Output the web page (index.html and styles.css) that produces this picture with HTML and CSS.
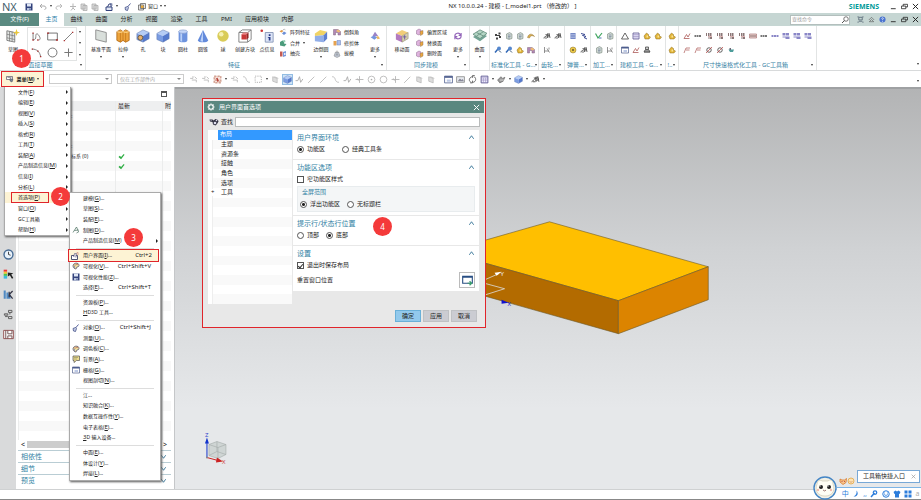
FILE: index.html
```html
<!DOCTYPE html>
<html lang="zh-CN">
<head>
  <meta charset="UTF-8">
  <meta name="viewport" content="width=device-width, initial-scale=1.0">
  <title>NX 10.0.0.24 - 建模</title>
  <link rel="stylesheet" href="styles.css">
</head>
<body>
  <!-- icon set -->
  <svg class="defs" width="0" height="0">
    <symbol id="save" viewBox="0 0 16 16"><path d="M1 1h14v14H1z" fill="#33427c"/><path d="M4 1h8v6H4z" fill="#dfe6f5"/><path d="M4 10h8v5H4z" fill="#b9c4de"/><path d="M9 11h2v3H9z" fill="#33427c"/></symbol>
    <symbol id="undo" viewBox="0 0 16 16"><path d="M3 6h7c5 0 5 7 1 7M6 2L2 6l4 4" fill="none" stroke="#aaa" stroke-width="2"/></symbol>
    <symbol id="redo" viewBox="0 0 16 16"><path d="M13 6H6c-5 0-5 7-1 7M10 2l4 4-4 4" fill="none" stroke="#bbb" stroke-width="2"/></symbol>
    <symbol id="cut" viewBox="0 0 16 16"><path d="M8 1v9M2 7h12M8 10l-4 5M8 10l4 4" fill="none" stroke="#b5b5b5" stroke-width="2"/></symbol>
    <symbol id="copy" viewBox="0 0 16 16"><path d="M2 2h8v10H2zM6 5h8v10H6z" fill="#ddd" stroke="#aaa" stroke-width="1.5"/></symbol>
    <symbol id="touch" viewBox="0 0 16 16"><path d="M2 8h12v7H2z" fill="#dfe4f2" stroke="#33427c" stroke-width="2"/><path d="M5 8l3-6h4v6" fill="none" stroke="#33427c" stroke-width="2"/><path d="M10 2l4-1v5" stroke="#33427c" fill="none"/></symbol>
    <symbol id="swap" viewBox="0 0 16 16"><path d="M1 11h6M4 8l-3 3 3 3M7 4h6v6H8z" fill="#c3cbe6" stroke="#33427c" stroke-width="1.6"/></symbol>
    <symbol id="brush" viewBox="0 0 16 16"><path d="M13 1L7 8" stroke="#556099" stroke-width="2"/><path d="M7 7L2 9l1 5 4 1 2-6z" fill="#c3cbe6" stroke="#33427c" stroke-width="1.4"/></symbol>
    <symbol id="win" viewBox="0 0 16 16"><path d="M1 4h10v10H1zM5 1h10v10H5z" fill="#e8e8e8" stroke="#555" stroke-width="1.4"/><path d="M6 5h5v5H6z" fill="#e5a83b"/></symbol>
    <symbol id="sketch" viewBox="0 0 16 16"><path d="M1 2l9 2v11l-9-2z" fill="#e3e6e4" stroke="#777"/><path d="M1 6l9 2M1 10l9 2M4 3v11M7 3v11" stroke="#777" stroke-width=".8"/><path d="M12 0l1 3 3 1-3 1-1 3-1-3-3-1 3-1z" fill="#e9c73c"/></symbol>
    <symbol id="profile" viewBox="0 0 16 16"><path d="M3 3v10M3 13c3 0 4-2 4-5 0-5 2-5 4-2 3 4 3 7 0 7" fill="none" stroke="#777" stroke-width="1.3"/><path d="M2 2h2v2H2zM2 12h2v2H2zM9 12h2v2H9z" fill="#a33"/></symbol>
    <symbol id="rect" viewBox="0 0 16 16"><path d="M1 3h14v10H1z" fill="none" stroke="#666" stroke-width="1.3"/><path d="M0 2h3v2H0zM13 12h3v2h-3z" fill="#a33"/></symbol>
    <symbol id="line" viewBox="0 0 16 16"><path d="M2 14L14 2" stroke="#777" stroke-width="1.3"/><path d="M1 13h2v2H1zM13 1h2v2h-2z" fill="#a33"/></symbol>
    <symbol id="arc" viewBox="0 0 16 16"><path d="M2 3c6 0 11 4 12 11" fill="none" stroke="#777" stroke-width="1.3"/><path d="M1 2h2v2H1zM13 13h2v2h-2zM9 5h2v2H9z" fill="#a33"/></symbol>
    <symbol id="circle" viewBox="0 0 16 16"><circle cx="8" cy="8" r="6.5" fill="none" stroke="#666" stroke-width="1.3"/></symbol>
    <symbol id="plus" viewBox="0 0 16 16"><path d="M8 2v12M2 8h12" stroke="#777" stroke-width="1.5"/></symbol>
    <symbol id="plane" viewBox="0 0 16 16"><path d="M2 1l12 3v11L2 12z" fill="#d9dfdb" stroke="#888"/></symbol>
    <symbol id="extrude" viewBox="0 0 16 16"><path d="M1 3l4-2 3 2 3-2 4 2v10l-4 2-3-2-3 2-4-2z" fill="#eda43c" stroke="#b36a16"/><path d="M5 4v11M11 4v11M8 3v10" stroke="#c67a1e"/><path d="M1 3l4 1 3-1 3 1 4-1" fill="none" stroke="#ffdf9a"/></symbol>
    <symbol id="cube" viewBox="0 0 16 16"><path d="M1 5l7-4 7 3-7 4z" fill="#b5ccf5"/><path d="M1 5l7 3v7l-7-3z" fill="#7a9ce2"/><path d="M8 8l7-4v7l-7 4z" fill="#5579cc"/><path d="M1 5l7-4 7 3v7l-7 4-7-3z" fill="none" stroke="#6079ad" stroke-width=".6"/></symbol>
    <symbol id="hole" viewBox="0 0 16 16"><use href="#cube"/><circle cx="5" cy="10" r="2.8" fill="#e6b06c" stroke="#63553f"/></symbol>
    <symbol id="cyl" viewBox="0 0 16 16"><path d="M3 3v10c0 3 10 3 10 0V3" fill="#6d93de"/><path d="M5 4v10l2 .5V4z" fill="#b9d0f8"/><ellipse cx="8" cy="3" rx="5" ry="2" fill="#c4d6f8" stroke="#6b86c0" stroke-width=".6"/></symbol>
    <symbol id="cone" viewBox="0 0 16 16"><path d="M8 1l6 12c-1 3-11 3-12 0z" fill="#638adb"/><path d="M8 1L5 14l3 .5z" fill="#b9d0f8"/></symbol>
    <symbol id="ball" viewBox="0 0 16 16"><circle cx="8" cy="8" r="6.5" fill="#d9cc58"/><circle cx="6" cy="6" r="2.6" fill="#f5f0b2"/></symbol>
    <symbol id="redcube" viewBox="0 0 16 16"><path d="M1 4l4-3h10v11l-4 3H1zM1 4h10v11M11 4l4-3" fill="none" stroke="#777"/><path d="M4 6h6v6H4z" fill="#c93737"/><path d="M4 6l2-2h6l-2 2z" fill="#ee8585"/><path d="M10 6l2-2v6l-2 2z" fill="#952424"/></symbol>
    <symbol id="info" viewBox="0 0 16 16"><circle cx="2" cy="2" r="1.5" fill="#c33"/><path d="M6 4h9v11H6z" fill="#dce4f7" stroke="#8492b5"/><path d="M10 6h2v2h-2zM9 9h3v4h1H9h1v-3H9z" fill="#2a3c88"/></symbol>
    <symbol id="pattern" viewBox="0 0 16 16"><path d="M1 7l4-3 4 2-4 3z" fill="#e39a45"/><path d="M6 11l4-4 5 3-5 4z" fill="#6b8ed6"/><path d="M7 5l3-3 3 2" fill="none" stroke="#888"/></symbol>
    <symbol id="unite" viewBox="0 0 16 16"><path d="M2 6l5-3 3 2v4l5 1-4 5-9-2z" fill="#4b9b7b"/><path d="M7 3l5-1 1 4-3 1z" fill="#94cfb4"/></symbol>
    <symbol id="shell" viewBox="0 0 16 16"><path d="M2 3h5v10H2z" fill="#c35b53"/><path d="M8 4l6-2v10l-6 2z" fill="#7797db"/><path d="M10 6h3v4h-3z" fill="#e8edf8"/></symbol>
    <symbol id="blend" viewBox="0 0 16 16"><path d="M1 5l6-4 8 2-4 4-10 1z" fill="#f1d364"/><path d="M1 8l10-1v8L1 14z" fill="#91aee8"/><path d="M11 7l4-4v8l-4 4z" fill="#5c7fd0"/></symbol>
    <symbol id="chamfer" viewBox="0 0 16 16"><path d="M1 3h9l5 4v7h-5V9H5v5H1z" fill="#b187b5" stroke="#80677f"/><path d="M10 3l5 4-4 2-5-3z" fill="#f0bd72"/></symbol>
    <symbol id="trim" viewBox="0 0 16 16"><path d="M1 4h6v9H1z" fill="#e6a24f"/><path d="M8 3h7v9H8z" fill="#a9bfee" stroke="#667db6"/></symbol>
    <symbol id="draft" viewBox="0 0 16 16"><path d="M2 12l3-8h6l3 8-6 3z" fill="#c2cad8" stroke="#7a7a7a"/><path d="M8 1v9M5 10h6" stroke="#777"/></symbol>
    <symbol id="more" viewBox="0 0 16 16"><path d="M1 10l5-3 6 3-5 4z" fill="#7695dd"/><path d="M8 1l5 7H4z" fill="#9a83c7"/><path d="M10 9l3-1 3 4-4 1z" fill="#ecb95d"/></symbol>
    <symbol id="move" viewBox="0 0 16 16"><path d="M1 5l7-4 7 3-7 4z" fill="#f2cd79"/><path d="M1 5l7 3v7l-7-3z" fill="#b27ac0"/><path d="M8 8l7-4v7l-7 4z" fill="#d6cfae" stroke="#8a856d" stroke-width=".6"/><path d="M11 7v5M9 9h4" stroke="#6a58a0"/></symbol>
    <symbol id="face" viewBox="0 0 16 16"><path d="M1 5l5-3 4 2v7l-4 3-5-2z" fill="#dfb3de" stroke="#8e6b91"/><path d="M8 7l6-2v7l-5 3z" fill="#eea83f" stroke="#7b6349" stroke-width=".8"/></symbol>
    <symbol id="cycle" viewBox="0 0 16 16"><path d="M3 8c0-5 7-6 9-2M13 8c0 5-7 6-9 2M13 3v4H9M3 13V9h4" fill="none" stroke="#9365b9" stroke-width="1.8"/></symbol>
    <symbol id="surface" viewBox="0 0 16 16"><path d="M0 9l8-5 8 4-8 6z" fill="#72a495"/><path d="M0 6l8-5 8 4-8 6z" fill="#b4d6c5" stroke="#6a9282"/><path d="M4 4l8 4M4 8l8-5" stroke="#6a9282"/></symbol>
    <symbol id="nodes" viewBox="0 0 16 16"><path d="M2 4h4v4H2zM9 1h4v4H9zM10 8h4v4h-4zM4 11h4v4H4zM6 6h6v2H6z" fill="#444"/></symbol>
    <symbol id="doc" viewBox="0 0 16 16"><path d="M3 4l6-3 5 3v9l-6 2-5-2z" fill="#ccd5d0" stroke="#68786f"/><path d="M6 6h5M6 9h5M6 12h4" stroke="#568"/></symbol>
    <symbol id="gold" viewBox="0 0 16 16"><path d="M2 8l5-6 4 3v3l4 2-3 4H4z" fill="#e2b538" stroke="#8c6c22"/><path d="M7 7h3v4H7z" fill="#fbe493"/></symbol>
    <symbol id="leaf" viewBox="0 0 16 16"><path d="M1 11c2-8 9-9 14-2-5-3-8-2-10 3z" fill="#d9ad4d" stroke="#94763c"/></symbol>
    <symbol id="wrench" viewBox="0 0 16 16"><path d="M2 13l6-7" stroke="#2e66b5" stroke-width="3"/><circle cx="10" cy="5" r="4" fill="#5587ce"/><path d="M10 9l4 4" stroke="#3b5776" stroke-width="2"/></symbol>
    <symbol id="gear2" viewBox="0 0 16 16"><path d="M1 12l5-4M5 5l9 3M9 3v9M12 2l2 10M3 12h5" fill="none" stroke="#555" stroke-width="1.7"/><circle cx="10" cy="7" r="3" fill="none" stroke="#555" stroke-width="1.5"/></symbol>
    <symbol id="spring" viewBox="0 0 16 16"><path d="M3 2h10v12H3z" fill="#5970b6"/><path d="M3 5h10M3 8h10M3 11h10M6 2v12M10 2v12" stroke="#cfd7f2"/></symbol>
    <symbol id="coil" viewBox="0 0 16 16"><path d="M2 3l8 2-5 2 7 2-4 2 6 3" fill="none" stroke="#3d4c94" stroke-width="2"/></symbol>
    <symbol id="ring" viewBox="0 0 16 16"><circle cx="8" cy="8" r="6" fill="#e9c747" stroke="#8b7127"/><circle cx="8" cy="8" r="2" fill="#655631"/></symbol>
    <symbol id="check" viewBox="0 0 16 16"><path d="M1 3l5 9 8-10" fill="none" stroke="#3ea55e" stroke-width="2.4"/><path d="M8 12h5" stroke="#5273b5" stroke-width="2"/></symbol>
    <symbol id="axes" viewBox="0 0 16 16"><path d="M3 2v12M3 10h9M8 5l5 8M12 3v4" fill="none" stroke="#666" stroke-width="1.4"/></symbol>
    <symbol id="tri" viewBox="0 0 16 16"><path d="M8 2l7 12H1z" fill="none" stroke="#444" stroke-width="1.6"/></symbol>
    <symbol id="grid" viewBox="0 0 16 16"><path d="M2 2h12v12H2z" fill="#eef" stroke="#5a548e" stroke-width="1.6"/><path d="M2 5h12M6 5v9M10 5v9M2 9h12" stroke="#9284b8"/></symbol>
    <symbol id="stamp" viewBox="0 0 16 16"><path d="M5 2h6v5H5zM2 12h12M4 8h8l2 4H2z" fill="#ccc" stroke="#444" stroke-width="1.5"/></symbol>
    <symbol id="redsk" viewBox="0 0 16 16"><path d="M2 13l5-8 3 5 4-7M2 13h11" fill="none" stroke="#a8514f" stroke-width="1.5"/></symbol>
    <symbol id="leader" viewBox="0 0 16 16"><path d="M2 14L6 4h8M6 8h7" fill="none" stroke="#b0605e" stroke-width="1.5"/></symbol>
    <symbol id="tol" viewBox="0 0 16 16"><path d="M2 2h2v6H2zM6 2h3v6H6zM10 2h3v6h-3zM7 10h2v4H7zM10 10h4v4h-4z" fill="#8b7777"/><path d="M6 8h8v1H6z" fill="#b66"/></symbol>
    <symbol id="tol1" viewBox="0 0 16 16"><path d="M1 6h3v4H1zM5 6h4v4H5zM10 6h4v4h-4z" fill="#777"/></symbol>
    <symbol id="tolb" viewBox="0 0 16 16"><path d="M1 4h14v8H1z" fill="#e9d5d2" stroke="#a77" stroke-width="1.4"/><path d="M3 6h2v4H3zM7 6h2v4H7zM11 6h2v4h-2z" fill="#866"/></symbol>
    <symbol id="tolv" viewBox="0 0 16 16"><path d="M1 6h4v4H1zM6 6h4v4H6zM11 6h4v4h-4z" fill="#8a87c7"/></symbol>
    <symbol id="tolp" viewBox="0 0 16 16"><path d="M1 2h6v5H1zM8 2h6v5H8zM1 9h6v2H1zM7 9h8v5H7z" fill="#8a87c7"/></symbol>
    <symbol id="dia" viewBox="0 0 16 16"><circle cx="8" cy="8" r="4.5" fill="none" stroke="#333" stroke-width="1.5"/><path d="M2 14L14 2" stroke="#b44" stroke-width="1.5"/></symbol>
    <symbol id="drop" viewBox="0 0 16 16"><path d="M3 7h11l-2 5H6z" fill="#4d9d9b"/><path d="M5 4h3v4H5z" fill="#667"/></symbol>
    <symbol id="glass" viewBox="0 0 16 16"><circle cx="10" cy="6" r="4.5" fill="none" stroke="#555" stroke-width="1.6"/><path d="M7 9l-5 5" stroke="#555" stroke-width="2"/></symbol>
    <symbol id="full" viewBox="0 0 16 16"><path d="M1 2h3M12 2h3M1 14h3M12 14h3" stroke="#456" stroke-width="1.6"/><path d="M4 3h8v6H4zM4 12h8" fill="none" stroke="#456" stroke-width="1.6"/></symbol>
    <symbol id="up" viewBox="0 0 16 16"><path d="M2 9l6-6 6 6M3 13l5-5 5 5z" fill="none" stroke="#555" stroke-width="1.4"/></symbol>
    <symbol id="help" viewBox="0 0 16 16"><circle cx="8" cy="8" r="7" fill="#4a73cf"/><path d="M6 6c0-3 5-2 4 0-1 1-2 1-2 3M8 11v2" fill="none" stroke="#fff" stroke-width="1.6"/></symbol>
    <symbol id="min" viewBox="0 0 16 16"><path d="M2 13h11" stroke="#222" stroke-width="2"/></symbol>
    <symbol id="restore" viewBox="0 0 16 16"><path d="M1 7h10v6H1zM5 7V3h10v6h-4" fill="none" stroke="#222" stroke-width="1.8"/></symbol>
    <symbol id="close" viewBox="0 0 16 16"><path d="M2 2l12 12M14 2L2 14" stroke="currentColor" stroke-width="2.2"/></symbol>
    <symbol id="ghost" viewBox="0 0 16 16"><path d="M2 6h5V2M5 9h8v4M10 3l4 4" fill="none" stroke="#bbb" stroke-width="1.6"/></symbol>
    <symbol id="gdash" viewBox="0 0 16 16"><path d="M2 2h11v11H2z" fill="none" stroke="#999" stroke-dasharray="2 2" stroke-width="1.4"/></symbol>
    <symbol id="snap" viewBox="0 0 16 16"><path d="M2 2h12v12H2z" fill="#f7e4dd" stroke="#b06047" stroke-dasharray="4 2" stroke-width="1.4"/><path d="M4 9h7M8 5v7M5 5l6 7" fill="none" stroke="#b33a2c" stroke-width="1.4"/></symbol>
    <symbol id="gline" viewBox="0 0 16 16"><path d="M2 14L13 3" stroke="#bbb" stroke-width="1.6"/></symbol>
    <symbol id="gcurve" viewBox="0 0 16 16"><path d="M2 3c8 0 3 10 12 10" fill="none" stroke="#bbb" stroke-width="1.6"/></symbol>
    <symbol id="gwave" viewBox="0 0 16 16"><path d="M1 10h4l3-7 2 10 4-6" fill="none" stroke="#aaa" stroke-width="1.6"/></symbol>
    <symbol id="gcross" viewBox="0 0 16 16"><path d="M8 2v12M1 8h14M4 6l2 4" stroke="#b5b5b5" stroke-width="1.6"/></symbol>
    <symbol id="gdot" viewBox="0 0 16 16"><circle cx="8" cy="8" r="6" fill="none" stroke="#b0b0b0" stroke-width="1.4"/><circle cx="8" cy="8" r="1.5" fill="#aaa"/></symbol>
    <symbol id="gcirc" viewBox="0 0 16 16"><circle cx="8" cy="8" r="6" fill="none" stroke="#b0b0b0" stroke-width="1.4"/></symbol>
    <symbol id="gface" viewBox="0 0 16 16"><path d="M3 3l8 3v8l-8-3zM6 3l7 3" fill="#ddd" stroke="#aaa"/></symbol>
    <symbol id="window" viewBox="0 0 16 16"><path d="M1 2h14v12H1z" fill="#fff" stroke="#4d5d8d" stroke-width="1.4"/><path d="M1 2h14v3H1z" fill="#4d5d8d"/><path d="M5 8h7v4H5z" fill="#bcc8e4"/></symbol>
    <symbol id="picture" viewBox="0 0 16 16"><path d="M1 3h14v10H1z" fill="#e6e9ee" stroke="#888" stroke-width="1.4"/><path d="M3 11l4-5 3 3 2-2 2 4z" fill="#889"/></symbol>
    <symbol id="rot" viewBox="0 0 16 16"><path d="M7 3C1 5 1 12 6 13M9 13c6-1 6-9 1-10M4 14h4v-4M12 1H8v4" fill="none" stroke="#555" stroke-width="1.5"/></symbol>
    <symbol id="layer" viewBox="0 0 16 16"><path d="M1 9l6-6 3 3 4-2-3 7-6 3z" fill="#999" stroke="#555"/><path d="M5 9h8" stroke="#fff"/></symbol>
    <symbol id="menu" viewBox="0 0 16 16"><path d="M1 3h12v6H1z" fill="#fff" stroke="#556" stroke-width="1.4"/><path d="M3 5h8M8 7l6 2-2 5-4-2z" fill="#789" stroke="#445"/></symbol>
    <symbol id="clock" viewBox="0 0 16 16"><circle cx="8" cy="8" r="6.5" fill="#e9f2fb" stroke="#466b94" stroke-width="2"/><path d="M8 4v4l3 1" fill="none" stroke="#333" stroke-width="1.3"/></symbol>
    <symbol id="rainbow" viewBox="0 0 16 16"><path d="M1 1h5v3H1z" fill="#e33"/><path d="M1 4h5v3H1z" fill="#f4c430"/><path d="M1 7h5v3H1z" fill="#4cc44c"/><path d="M1 10h5v4H1z" fill="#3bb9dd"/><path d="M7 5l8 1-3 2 3 5-2 1-3-5-3 2z" fill="#222"/></symbol>
    <symbol id="bars" viewBox="0 0 16 16"><path d="M1 2h3v12H1zM5 5h3v9H5zM8 8h3v6H8z" fill="#508ac3"/><path d="M14 3l-5 5 5 6M9 4v8" fill="none" stroke="#334" stroke-width="1.8"/></symbol>
    <symbol id="roles" viewBox="0 0 16 16"><path d="M8 2h5v3H8zM2 7h5v2H2zM8 11h5v3H8zM3 11h4M10 5v3" fill="#ddd" stroke="#555" stroke-width="1.3"/></symbol>
    <symbol id="book" viewBox="0 0 16 16"><path d="M1 2h14v12H1z" fill="#fff" stroke="#8e4444" stroke-width="1.3"/><path d="M4 2v12M7 2v5h6V2M7 14v-4h6v4" fill="none" stroke="#715353" stroke-width="1.4"/></symbol>
    <symbol id="pen" viewBox="0 0 16 16"><path d="M2 13L9 2l4 9M5 9l8-1M9 14l5-3" fill="none" stroke="#456b5b" stroke-width="1.4"/></symbol>
    <symbol id="ui" viewBox="0 0 16 16"><path d="M1 7h12v8H1z" fill="#fff" stroke="#3b4168" stroke-width="1.8"/><path d="M5 10l2-7h4l-1 8" fill="#d9d1dc" stroke="#3b4168"/><path d="M11 2l3-1v5" stroke="#b55" fill="none"/></symbol>
    <symbol id="palette" viewBox="0 0 16 16"><path d="M2 8c0-7 12-8 12-1 0 4-5 1-5 5 0 4-7 1-7-4z" fill="#eadf9d" stroke="#564c66" stroke-width="1.5"/><path d="M5 5h2v2H5zM9 4h2v2H9z" fill="#b54040"/><path d="M4 9h2v2H4z" fill="#3b5dc0"/></symbol>
    <symbol id="note" viewBox="0 0 16 16"><path d="M2 2h13v9H9l-5 4v-4H2z" fill="#eedd8e" stroke="#555" stroke-width="1.4"/><path d="M4 5h8M4 8h6" stroke="#775"/></symbol>
    <symbol id="gem" viewBox="0 0 16 16"><path d="M8 1v2M8 13v2M1 8h2M13 8h2M3 3l2 2M11 11l2 2M13 3l-2 2M3 13l2-2" stroke="#fff" stroke-width="2.4"/><circle cx="8" cy="8" r="4.5" fill="none" stroke="#fff" stroke-width="2.2"/></symbol>
    <symbol id="bino" viewBox="0 0 20 16"><path d="M1 3h6l2 2 4-3 5 2 1 3-3 5-3 3-5-2-1-5-5-1z" fill="#334"/><circle cx="12" cy="10" r="2.6" fill="#dde"/><circle cx="15" cy="5" r="1.6" fill="#dde"/><path d="M3 5h3" stroke="#ccd"/></symbol>
    <symbol id="reset" viewBox="0 0 16 16"><path d="M1 2h14v10H1z" fill="#fff" stroke="#274d82" stroke-width="1.6"/><path d="M1 2h14v2H1z" fill="#274d82"/><path d="M8 12h5M11 9l3 3-3 3" fill="none" stroke="#3a9d6c" stroke-width="1.8"/></symbol>
    <symbol id="tick" viewBox="0 0 16 16"><path d="M1 9l3-3 3 3 6-7 2 2-8 10z" fill="#2fae45"/></symbol>
    <symbol id="chev" viewBox="0 0 16 16"><path d="M3 11l5-7 5 7" fill="none" stroke="#2f6f92" stroke-width="2"/></symbol>
  </svg>

  <header class="titlebar">
    <span class="logo">NX</span>
    <svg class="ico"><use href="#save"/></svg>
    <svg class="ico gap"><use href="#undo"/></svg><i class="dot"></i>
    <svg class="ico"><use href="#redo"/></svg>
    <svg class="ico gap"><use href="#cut"/></svg>
    <svg class="ico"><use href="#copy"/></svg>
    <svg class="ico"><use href="#copy"/></svg>
    <svg class="ico gap"><use href="#touch"/></svg><i class="dot"></i>
    <svg class="ico gap"><use href="#brush"/></svg>
    <button class="winmenu"><svg class="ico"><use href="#win"/></svg>窗口<i class="dot"></i><i class="dot"></i></button>
    <h1>NX 10.0.0.24 - 建模 - [_model1.prt （修改的） ]</h1>
    <span class="brand">SIEMENS</span>
    <div class="winbtns">
      <svg class="ico"><use href="#min"/></svg>
      <svg class="ico"><use href="#restore"/></svg>
      <svg class="ico"><use href="#close"/></svg>
    </div>
  </header>

  <nav class="tabs">
    <button class="tab file">文件(F)</button>
    <button class="tab active">主页</button>
    <button class="tab">曲线</button>
    <button class="tab">曲面</button>
    <button class="tab">分析</button>
    <button class="tab">视图</button>
    <button class="tab">渲染</button>
    <button class="tab">工具</button>
    <button class="tab">PMI</button>
    <button class="tab">应用模块</button>
    <button class="tab">内部</button>
    <div class="search">
      <input type="text" placeholder="查找命令" aria-label="查找命令">
      <svg class="ico"><use href="#glass"/></svg>
    </div>
    <div class="winbtns">
      <svg class="ico"><use href="#full"/></svg>
      <svg class="ico"><use href="#up"/></svg>
      <svg class="ico"><use href="#help"/></svg>
      <svg class="ico"><use href="#min"/></svg>
      <svg class="ico"><use href="#restore"/></svg>
      <svg class="ico"><use href="#close"/></svg>
    </div>
  </nav>

  <div class="ribbon">
    <section class="group g-sketch">
      <div class="tools">
        <button class="big"><svg><use href="#sketch"/></svg>草图</button>
        <div class="gallery">
          <svg><use href="#profile"/></svg><svg><use href="#rect"/></svg><svg><use href="#line"/></svg>
          <svg><use href="#arc"/></svg><svg><use href="#circle"/></svg><svg><use href="#plus"/></svg>
        </div>
        <div class="scroller"><i class="dot"></i><i class="dot"></i><i class="dot"></i></div>
      </div>
      <footer><span>直接草图</span><i class="dot"></i></footer>
    </section>
    <section class="group g-feature">
      <div class="tools">
        <button class="big wide"><svg><use href="#plane"/></svg>基准平面<i class="dot"></i></button>
        <button class="big"><svg><use href="#extrude"/></svg>拉伸<i class="dot"></i></button>
        <button class="big"><svg><use href="#hole"/></svg>孔</button>
        <button class="big"><svg><use href="#cube"/></svg>块</button>
        <button class="big"><svg><use href="#cyl"/></svg>圆柱</button>
        <button class="big"><svg><use href="#cone"/></svg>圆锥</button>
        <button class="big"><svg><use href="#ball"/></svg>球</button>
        <button class="big wide"><svg><use href="#redcube"/></svg>创建方块</button>
        <button class="big"><svg><use href="#info"/></svg>点信息</button>
        <div class="stack">
          <button><svg class="ico"><use href="#pattern"/></svg>阵列特征</button>
          <button><svg class="ico"><use href="#unite"/></svg>合并<i class="dot"></i></button>
          <button><svg class="ico"><use href="#shell"/></svg>抽壳</button>
        </div>
        <button class="big"><svg><use href="#blend"/></svg>边倒圆<i class="dot"></i></button>
        <div class="stack">
          <button><svg class="ico"><use href="#chamfer"/></svg>倒斜角</button>
          <button><svg class="ico"><use href="#trim"/></svg>修剪体</button>
          <button><svg class="ico"><use href="#draft"/></svg>拔模</button>
        </div>
        <button class="big small-icon"><svg><use href="#more"/></svg>更多<i class="dot"></i></button>
      </div>
      <footer><span>特征</span><i class="dot"></i></footer>
    </section>
    <section class="group g-sync">
      <div class="tools">
        <button class="big wide"><svg><use href="#move"/></svg>移动面</button>
        <div class="stack">
          <button><svg class="ico"><use href="#face"/></svg>偏置区域</button>
          <button><svg class="ico"><use href="#face"/></svg>替换面</button>
          <button><svg class="ico"><use href="#face"/></svg>删除面</button>
        </div>
        <button class="big small-icon"><svg><use href="#cycle"/></svg>更多<i class="dot"></i></button>
      </div>
      <footer><span>同步建模</span><i class="dot"></i></footer>
    </section>
    <section class="group g-surface">
      <div class="tools"><button class="big"><svg><use href="#surface"/></svg>曲面<i class="dot"></i></button></div>
    </section>
    <section class="group g-std">
      <div class="rows">
        <div><svg class="ico"><use href="#nodes"/></svg><svg class="ico"><use href="#doc"/></svg><svg class="ico"><use href="#doc"/></svg><svg class="ico"><use href="#leaf"/></svg></div>
        <div><svg class="ico"><use href="#wrench"/></svg><svg class="ico"><use href="#wrench"/></svg><svg class="ico"><use href="#gold"/></svg><svg class="ico"><use href="#chamfer"/></svg></div>
      </div>
      <footer><span>标准化工具 - G...</span><i class="dot"></i></footer>
    </section>
    <section class="group g-gear">
      <div class="rows">
        <div><svg class="ico"><use href="#gear2"/></svg><svg class="ico"><use href="#gear2"/></svg></div>
        <div><svg class="ico"><use href="#axes"/></svg></div>
      </div>
      <footer><span>齿轮...</span><i class="dot"></i></footer>
    </section>
    <section class="group g-gear">
      <div class="rows">
        <div><svg class="ico"><use href="#spring"/></svg><svg class="ico"><use href="#coil"/></svg></div>
        <div><svg class="ico"><use href="#ring"/></svg><svg class="ico"><use href="#gear2"/></svg></div>
      </div>
      <footer><span>弹簧...</span><i class="dot"></i></footer>
    </section>
    <section class="group g-gear">
      <div class="rows">
        <div><svg class="ico"><use href="#check"/></svg><svg class="ico"><use href="#doc"/></svg></div>
        <div><svg class="ico"><use href="#doc"/></svg><svg class="ico"><use href="#axes"/></svg></div>
      </div>
      <footer><span>加工...</span><i class="dot"></i></footer>
    </section>
    <section class="group g-std">
      <div class="rows">
        <div><svg class="ico"><use href="#tri"/></svg><svg class="ico"><use href="#grid"/></svg><svg class="ico"><use href="#gold"/></svg><svg class="ico"><use href="#gold"/></svg></div>
        <div><svg class="ico"><use href="#window"/></svg><svg class="ico"><use href="#redsk"/></svg><svg class="ico"><use href="#stamp"/></svg></div>
      </div>
      <footer><span>建模工具 - G...</span><i class="dot"></i></footer>
    </section>
    <section class="group g-one">
      <div class="rows">
        <div><svg class="ico"><use href="#gold"/></svg></div>
        <div><svg class="ico"><use href="#gold"/></svg></div>
      </div>
      <footer><span>!..</span><i class="dot"></i></footer>
    </section>
    <section class="group g-dim">
      <div class="rows">
        <div><svg class="ico"><use href="#redsk"/></svg><svg class="ico"><use href="#tol1"/></svg><svg class="ico"><use href="#tol"/></svg><svg class="ico"><use href="#tol"/></svg><svg class="ico"><use href="#tol"/></svg><svg class="ico"><use href="#tol"/></svg><svg class="ico"><use href="#tolb"/></svg><svg class="ico"><use href="#tol1"/></svg><svg class="ico"><use href="#tolv"/></svg><svg class="ico"><use href="#tolp"/></svg><svg class="ico"><use href="#tolp"/></svg><svg class="ico"><use href="#tolp"/></svg></div>
        <div><svg class="ico"><use href="#leader"/></svg><svg class="ico"><use href="#leader"/></svg><svg class="ico"><use href="#dia"/></svg><svg class="ico"><use href="#dia"/></svg><svg class="ico"><use href="#drop"/></svg></div>
      </div>
      <footer><span>尺寸快速格式化工具 - GC工具箱</span><i class="dot"></i></footer>
    </section>
    <i class="dot ribbon-more"></i>
  </div>

  <div class="selbar">
    <button class="menubtn"><svg class="ico"><use href="#menu"/></svg><b>菜单(<u>M</u>)</b><i class="dot"></i></button>
    <div class="drop"><select aria-label="类型过滤器"><option></option></select></div>
    <div class="drop"><select aria-label="选择范围"><option>仅在工作部件内</option></select></div>
    <div class="seltools">
      <svg class="ico"><use href="#ghost"/></svg><svg class="ico"><use href="#ghost"/></svg><svg class="ico"><use href="#snap"/></svg><i class="dot"></i>
      <svg class="ico"><use href="#ghost"/></svg><svg class="ico"><use href="#gcurve"/></svg><svg class="ico"><use href="#gdash"/></svg><i class="dot"></i>
      <svg class="ico"><use href="#gface"/></svg><svg class="ico on"><use href="#cube"/></svg><svg class="ico"><use href="#gwave"/></svg>
      <svg class="ico"><use href="#gline"/></svg><svg class="ico"><use href="#gline"/></svg><svg class="ico"><use href="#gcurve"/></svg>
      <svg class="ico"><use href="#gwave"/></svg><svg class="ico"><use href="#gcross"/></svg><svg class="ico"><use href="#gdot"/></svg>
      <svg class="ico"><use href="#gcirc"/></svg><svg class="ico"><use href="#gcross"/></svg><svg class="ico"><use href="#gline"/></svg>
      <svg class="ico"><use href="#gface"/></svg><svg class="ico"><use href="#gface"/></svg>
      <svg class="ico gap"><use href="#window"/></svg><svg class="ico"><use href="#picture"/></svg><svg class="ico"><use href="#rot"/></svg>
      <svg class="ico"><use href="#grid"/></svg><i class="dot"></i>
      <svg class="ico"><use href="#layer"/></svg><i class="dot"></i>
      <svg class="ico"><use href="#cube"/></svg><i class="dot"></i>
      <svg class="ico"><use href="#gear2"/></svg><i class="dot"></i>
    </div>
    <i class="dot ribbon-more"></i>
  </div>

  <main>
    <aside class="resbar">
      <svg><use href="#clock"/></svg>
      <svg><use href="#rainbow"/></svg>
      <svg><use href="#bars"/></svg>
      <svg><use href="#roles"/></svg>
      <svg><use href="#book"/></svg>
    </aside>

    <section class="navigator">
      <div class="navhead"><i></i></div>
      <table>
        <thead><tr><th class="name"></th><th>最新</th><th class="last">附</th></tr></thead>
        <tbody>
          <tr><td>:</td><td></td><td></td></tr>
          <tr><td></td><td></td><td></td></tr>
          <tr><td></td><td></td><td></td></tr>
          <tr><td>:</td><td></td><td></td></tr>
          <tr><td>标系 (0)</td><td><svg><use href="#tick"/></svg></td><td></td></tr>
          <tr><td></td><td><svg><use href="#tick"/></svg></td><td></td></tr>
        </tbody>
      </table>
      <div class="blank"><i></i><i></i><i></i></div>
      <div class="hscroll"><span>&lt;</span><i></i><span>&gt;</span></div>
      <button class="fold">相依性<svg class="ico down"><use href="#chev"/></svg></button>
      <button class="fold">细节<svg class="ico down"><use href="#chev"/></svg></button>
      <button class="fold">预览<svg class="ico down"><use href="#chev"/></svg></button>
    </section>

    <section class="view">
      <svg class="scene" viewBox="0 2 747 401" preserveAspectRatio="xMinYMin slice">
        <g stroke="#6b5a2c" stroke-width=".6">
          <path d="M375 135L534 180 444 214 270 165z" fill="#ffbf00"/>
          <path d="M270 165L444 214V247L270 198z" fill="#b36b00"/>
          <path d="M444 214L534 180V213L444 247z" fill="#dc8400"/>
        </g>
        <path d="M308 194l16-7M308 196l22 6-22 7" fill="none" stroke="#ddd" stroke-width=".8"/>
        <path d="M327 185l-7 1 2 3z" fill="#fff"/>
        <text x="326" y="189" class="axis" fill="#eee">Y</text>
        <path d="M327 213l7 3-7 1z" fill="#11c"/>
        <text x="333" y="219" class="axis" fill="#22c">X</text>
        <!-- view triad -->
        <path d="M34 358l8-3 9 3v10l-8 4-9-3z" fill="#cfd5d4" stroke="#a3a9a8" stroke-width=".6"/>
        <path d="M34 358l9 3 8-3M43 361v11M34 369l8-4 9 3M42 355v10" fill="none" stroke="#a3a9a8" stroke-width=".6"/>
        <path d="M32 371V355" stroke="#1133cc"/><path d="M30 357l2-6 2 6z" fill="#1133cc"/>
        <path d="M32 371l11 3" stroke="#c22"/><path d="M42 371l6 4-7 1z" fill="#c22"/>
        <circle cx="32" cy="371" r="1" fill="#888"/>
        <text x="30" y="350" class="axis" fill="#34c">Z</text>
        <text x="47" y="378" class="axis" fill="#c44">X</text>
      </svg>

      <div class="dialog">
        <div class="dlgtitle"><svg class="ico"><use href="#gem"/></svg><h2>用户界面首选项</h2><button aria-label="关闭"><svg class="ico"><use href="#close"/></svg></button></div>
        <div class="find"><svg><use href="#bino"/></svg><label for="find">查找</label><input type="text" id="find"></div>
        <div class="dlgbody">
          <ul class="tree">
            <li class="sel">布局</li><li>主题</li><li>资源条</li><li>接触</li><li>角色</li><li>选项</li><li class="plus">工具</li>
            <li></li><li></li><li></li><li></li><li></li><li></li><li></li><li></li><li></li><li></li><li></li>
          </ul>
          <div class="opts">
            <section>
              <h3>用户界面环境<svg class="ico"><use href="#chev"/></svg></h3>
              <div class="line"><label class="apart"><input type="radio" name="env" checked>功能区</label><label><input type="radio" name="env">经典工具条</label></div>
            </section>
            <section>
              <h3>功能区选项<svg class="ico"><use href="#chev"/></svg></h3>
              <div class="line"><label><input type="checkbox">窄功能区样式</label></div>
              <fieldset>
                <h4>全屏范围</h4>
                <div class="line"><label><input type="radio" name="fs" checked>浮出功能区</label><label><input type="radio" name="fs">无标题栏</label></div>
              </fieldset>
            </section>
            <section>
              <h3>提示行/状态行位置<svg class="ico"><use href="#chev"/></svg></h3>
              <div class="line"><label><input type="radio" name="pos">顶部</label><label><input type="radio" name="pos" checked>底部</label></div>
            </section>
            <section>
              <h3>设置<svg class="ico"><use href="#chev"/></svg></h3>
              <div class="line"><label><input type="checkbox" checked>退出时保存布局</label></div>
              <div class="line resetrow">重置窗口位置<button aria-label="重置窗口位置"><svg><use href="#reset"/></svg></button></div>
            </section>
          </div>
        </div>
        <div class="actions"><button class="ok">确定</button><button>应用</button><button>取消</button></div>
        <span class="mark mark4">4</span>
      </div>
    </section>

    <ul class="menu mainmenu">
      <li>文件(<u>F</u>)</li>
      <li>编辑(<u>E</u>)</li>
      <li>视图(<u>V</u>)</li>
      <li>插入(<u>S</u>)</li>
      <li>格式(<u>R</u>)</li>
      <li>工具(<u>T</u>)</li>
      <li>装配(<u>A</u>)</li>
      <li>产品制造信息(<u>M</u>)</li>
      <li>信息(<u>I</u>)</li>
      <li>分析(<u>L</u>)</li>
      <li class="hot"><span>首选项(<u>P</u>)</span></li>
      <li>窗口(<u>O</u>)</li>
      <li>GC工具箱</li>
      <li>帮助(<u>H</u>)</li>
    </ul>

    <ul class="menu submenu">
      <li>建模(<u>G</u>)...</li>
      <li>草图(<u>S</u>)...</li>
      <li>装配(<u>E</u>)...</li>
      <li><svg class="ico"><use href="#pen"/></svg>制图(<u>D</u>)...</li>
      <li class="sub">产品制造信息(<u>M</u>)</li>
      <li class="rule"></li>
      <li class="picked"><svg class="ico"><use href="#ui"/></svg>用户界面(<u>I</u>)...<kbd>Ctrl+2</kbd></li>
      <li><svg class="ico"><use href="#palette"/></svg>可视化(<u>V</u>)...<kbd>Ctrl+Shift+V</kbd></li>
      <li><svg class="ico"><use href="#save"/></svg>可视化性能(<u>Z</u>)...</li>
      <li>选择(<u>E</u>)...<kbd>Ctrl+Shift+T</kbd></li>
      <li class="rule"></li>
      <li>资源板(<u>P</u>)...</li>
      <li><u>H</u>D3D 工具...</li>
      <li class="rule"></li>
      <li><svg class="ico"><use href="#brush"/></svg>对象(<u>O</u>)...<kbd>Ctrl+Shift+J</kbd></li>
      <li>测量(<u>U</u>)...</li>
      <li><svg class="ico"><use href="#palette"/></svg>调色板(<u>C</u>)...</li>
      <li><svg class="ico"><use href="#note"/></svg>背景(<u>A</u>)...</li>
      <li><svg class="ico"><use href="#window"/></svg>栅格(<u>G</u>)...</li>
      <li>视图剖切(<u>N</u>)...</li>
      <li class="rule"></li>
      <li>江...</li>
      <li>知识融合(<u>K</u>)...</li>
      <li>数据互操作性(<u>Y</u>)...</li>
      <li>电子表格(<u>E</u>)...</li>
      <li><u>3</u>D 输入设备...</li>
      <li class="rule"></li>
      <li>中面(<u>E</u>)...</li>
      <li>体设计(<u>Y</u>)...</li>
      <li>焊接(<u>L</u>)...</li>
    </ul>

    <span class="mark mark1">1</span>
    <span class="mark mark2">2</span>
    <span class="mark mark3">3</span>
  </main>

  <footer class="status"></footer>

  <!-- input method bar -->
  <div class="ime">
    <svg class="pet" viewBox="0 0 24 24"><circle cx="12" cy="12" r="11" fill="#f3f1e6" stroke="#4586c6" stroke-width="1.4"/><path d="M4 8c1-5 4-4 5-3h6c2-2 5-1 5 3 3 8-2 12-8 12S1 16 4 8z" fill="#fffef5" stroke="#c8c3ab" stroke-width=".6"/><circle cx="8" cy="11" r="2" fill="#222"/><circle cx="16" cy="11" r="2" fill="#222"/><circle cx="7" cy="10" r=".7" fill="#fff"/><circle cx="15" cy="10" r=".7" fill="#fff"/><path d="M10 14q2 2 3 0" fill="none" stroke="#855" stroke-width=".8"/><circle cx="5" cy="14" r="1.2" fill="#f5bcae"/><circle cx="18" cy="14" r="1.2" fill="#f5bcae"/></svg>
    <div class="imebar">
      <span>中</span>
      <svg class="ico" viewBox="0 0 16 16"><path d="M9 1c5 6 2 13-6 12 5-2 7-6 6-12z" fill="#2d7ddb"/></svg>
      <span>,,</span>
      <svg class="ico" viewBox="0 0 16 16"><path d="M2 14l7-8" stroke="#2d7ddb" stroke-width="3"/><circle cx="10" cy="5" r="3.5" fill="none" stroke="#2d7ddb" stroke-width="2.5"/></svg>
      <svg class="ico" viewBox="0 0 16 16"><circle cx="8" cy="8" r="6.5" fill="none" stroke="#2d7ddb" stroke-width="2"/><path d="M4 9q4 4 8 0M5 5v2M11 5v2" fill="none" stroke="#2d7ddb" stroke-width="1.5"/></svg>
      <svg class="ico" viewBox="0 0 16 16"><path d="M1 4l4-3 3 2 3-2 4 3-2 4h-1v7H4V8H3z" fill="#2d7ddb"/></svg>
      <svg class="ico" viewBox="0 0 16 16"><path d="M1 1h6v6H1zM9 1h6v6H9zM1 9h6v6H1zM9 9h6v6H9z" fill="#2d7ddb"/></svg>
      <span class="dim">a</span>
    </div>
    <div class="faces">
      <svg class="ico" viewBox="0 0 16 16"><path d="M2 4l4 2h5l4-3-1 8-6 4-6-5z" fill="#f8c58c" stroke="#d77727" stroke-width="1.5"/><path d="M5 9h2M10 9h2" stroke="#a33" stroke-width="1.5"/></svg>
      <svg class="ico" viewBox="0 0 16 16"><circle cx="8" cy="8" r="6" fill="#fde3b4" stroke="#e0a13b" stroke-width="1.5"/><path d="M5 9q3 3 6 0" fill="none" stroke="#b63"/></svg>
    </div>
    <div class="tip">工具箱快捷入口<svg class="ico"><use href="#close"/></svg></div>
  </div>
</body>
</html>
```
FILE: styles.css
```css
* {
  box-sizing: border-box;
}

body {
  margin: 0;
  height: 100vh;
  display: flex;
  flex-direction: column;
  position: relative;
  overflow: hidden;
  background: #fff;
  color: #222;
  font-family: "Noto Sans", "Noto Sans CJK SC", sans-serif;
  font-size: 5px;
  line-height: 7px;
}

h1, h2, h3, h4, ul, fieldset {
  margin: 0;
  padding: 0;
  font-weight: normal;
}

ul {
  list-style: none;
}

button, input, select {
  margin: 0;
  padding: 0;
  border: 0;
  background: none;
  color: inherit;
  font: inherit;
}

svg {
  display: block;
  flex: none;
}

.defs {
  position: absolute;
}

.ico {
  width: 8px;
  height: 8px;
}

.dot {
  flex: none;
  width: 0;
  height: 0;
  border: 1px solid transparent;
  border-top: 2px solid #333;
}

/* title bar */
.titlebar {
  display: flex;
  align-items: center;
  gap: 3px;
  height: 13px;
  padding: 0 2px;
  flex: none;
}

.logo {
  width: 20px;
  font-size: 11px;
  color: #44606b;
}

.titlebar .gap {
  margin-left: 3px;
}

.winmenu {
  display: flex;
  align-items: center;
  gap: 2px;
  margin-left: 3px;
}

.titlebar h1 {
  flex: 1;
  padding-left: 128px;
  text-align: center;
  font-size: 6px;
  white-space: nowrap;
}

.brand {
  margin-right: 8px;
  width: 148px;
  text-align: right;
  font-family: "Open Sans", sans-serif;
  font-size: 7px;
  font-weight: 700;
  color: #099;
}

.winbtns {
  display: flex;
  gap: 4px;
  color: #222;
}

.winbtns .ico {
  width: 7px;
  height: 7px;
}

/* tabs */
.tabs {
  display: flex;
  align-items: center;
  height: 13px;
  padding-right: 2px;
  flex: none;
  background: #c6d6d3;
  font-size: 6px;
}

.tab {
  min-width: 25px;
  height: 13px;
  padding: 0 6px;
  text-align: center;
}

.tab.file {
  width: 39px;
  background: #5a8a81;
  color: #fff;
}

.tab.active {
  background: #fff;
  color: #2a7ea8;
}

.search {
  display: flex;
  align-items: center;
  width: 60px;
  height: 10px;
  margin-left: auto;
  margin-right: 7px;
  border: 1px solid #b3bfbd;
  background: #fff;
}

.search input {
  flex: 1;
  min-width: 0;
  padding-left: 1px;
  font-size: 5px;
  outline: none;
}

.search input::placeholder {
  color: #999;
}

/* ribbon */
.ribbon {
  display: flex;
  height: 45px;
  flex: none;
  border-bottom: 1px solid #d8dadb;
}

.group {
  display: flex;
  flex-direction: column;
  flex: none;
  border-right: 1px solid #e2e4e4;
}

.group footer {
  display: flex;
  align-items: center;
  height: 9px;
  margin-top: auto;
  padding: 0 3px 0 1px;
  font-size: 6px;
  color: #3682a5;
  white-space: nowrap;
}

.group footer span {
  flex: 1;
  text-align: center;
}

.g-sketch {
  width: 86px;
}

.g-feature {
  width: 301px;
}

.g-sync {
  width: 83px;
}

.g-surface {
  width: 20px;
}

.g-std {
  width: 49px;
}

.g-gear {
  width: 26px;
}

.g-one {
  width: 13px;
}

.g-dim {
  width: 138px;
}

.tools {
  display: flex;
  padding: 1px 0 0 3px;
}

.g-surface .tools {
  padding-left: 0;
}

.big {
  display: flex;
  flex-direction: column;
  align-items: center;
  gap: 3px;
  width: 20px;
  padding-top: 2px;
  white-space: nowrap;
}

.big.wide {
  width: 24px;
}

.big svg {
  width: 14px;
  height: 14px;
}

.small-icon svg {
  padding: 2px;
}

.gallery {
  display: grid;
  grid-template-columns: repeat(3, 16px);
  grid-auto-rows: 16px;
  place-items: center;
  margin-left: 4px;
  border: 1px solid #e2e4e4;
}

.gallery svg {
  width: 11px;
  height: 11px;
}

.scroller {
  display: flex;
  flex-direction: column;
  justify-content: space-around;
  padding-left: 2px;
}

.stack {
  display: flex;
  flex-direction: column;
  height: 32px;
  margin: 0 1px;
}

.stack button {
  display: flex;
  align-items: center;
  gap: 3px;
  flex: 1;
  padding-left: 1px;
  white-space: nowrap;
}

.g-feature .stack {
  width: 32px;
}

.rows {
  padding: 6px 0 0 4px;
}

.g-one .rows {
  padding-left: 2px;
}

.rows div {
  display: flex;
  gap: 3px;
  height: 14px;
}

.ribbon-more {
  align-self: flex-end;
  margin: 0 2px 4px auto;
}

/* selection bar */
.selbar {
  display: flex;
  align-items: center;
  gap: 5px;
  height: 16px;
  flex: none;
  padding-left: 1px;
}

.menubtn {
  display: flex;
  align-items: center;
  justify-content: center;
  gap: 2px;
  width: 43px;
  height: 16px;
  border: 1px solid #e0252b;
  background: #fdf3d4;
  position: relative;
  z-index: 5;
}

.drop {
  position: relative;
  width: 63px;
  height: 10px;
  border: 1px solid #ccc;
  color: #aaa;
}

.drop + .drop {
  width: 67px;
}

.drop select {
  width: 100%;
  height: 8px;
  padding-left: 2px;
  appearance: none;
  vertical-align: top;
}

.drop::after {
  content: "";
  position: absolute;
  right: 2px;
  top: 3px;
  border: 2px solid transparent;
  border-top-color: #888;
}

.seltools {
  display: flex;
  align-items: center;
  gap: 3px;
}

.seltools .ico {
  width: 9px;
  height: 9px;
}

.seltools .on {
  outline: 1px solid #93bde3;
  background: #cfe4f7;
}

.seltools .gap {
  margin-left: 5px;
}

/* work area */
main {
  display: flex;
  flex: 1;
  min-height: 0;
  position: relative;
}

.resbar {
  display: flex;
  flex-direction: column;
  align-items: center;
  gap: 9px;
  width: 16px;
  padding-top: 162px;
  background: #d9dadb;
}

.resbar svg {
  width: 11px;
  height: 11px;
}

.navigator {
  display: flex;
  flex-direction: column;
  width: 159px;
  padding: 0 3px 3px 2px;
  border-right: 1px solid #c5c7c9;
}

.navhead {
  display: flex;
  align-items: center;
  justify-content: flex-end;
  height: 14px;
  flex: none;
  padding-right: 4px;
}

.navhead i {
  width: 6px;
  height: 6px;
  border: 1px solid #555;
  border-top-width: 2px;
}

.navigator table {
  width: 100%;
  border-collapse: separate;
  border-spacing: 0;
  table-layout: fixed;
}

.navigator tbody tr:nth-child(even) {
  background: #f8f8f8;
}

.navigator th {
  background: #eeeff0;
  font-size: 6px;
  font-weight: normal;
  text-align: left;
}

.navigator th.name, .blank i:first-child {
  width: 97px;
}

.navigator th.last, .blank i:last-child {
  width: 9px;
}

.navigator th, .navigator td {
  height: 10px;
  padding: 0 0 0 2px;
  border-left: 1px solid #ebecec;
  line-height: 7px;
}

.navigator td:first-child {
  padding-left: 52px;
}

.navigator td svg {
  width: 7px;
  height: 7px;
}

.blank {
  flex: 1;
  display: flex;
  background: repeating-linear-gradient(#fff 0 10px, #f8f8f8 10px 20px);
}

.blank i {
  border-left: 1px solid #ebecec;
}

.blank i:nth-child(2) {
  flex: 1;
}

.hscroll {
  display: flex;
  align-items: center;
  gap: 2px;
  height: 8px;
  flex: none;
  padding: 0 4px 0 3px;
  margin-bottom: 2px;
}

.hscroll i {
  width: 110px;
  height: 7px;
  background: #cdcdcd;
}

.hscroll span:last-child {
  margin-left: auto;
}

.hscroll span {
  font-size: 7px;
}

.fold {
  display: flex;
  align-items: center;
  justify-content: space-between;
  height: 12px;
  flex: none;
  padding: 0 4px 0 3px;
  border-top: 1px solid #b9cdd4;
  font-size: 7px;
  color: #2f7fa3;
}

.fold .ico {
  width: 7px;
  height: 7px;
}

.down {
  transform: rotate(180deg);
}

.view {
  flex: 1;
  position: relative;
  border-top: 2px solid #9fa1a3;
  background: linear-gradient(#b3b4b5, #d0d2d4 40%, #e6e8ea 80%);
}

.scene {
  width: 100%;
  height: 100%;
}

.axis {
  font-size: 6px;
}

/* menus */
.menu {
  position: absolute;
  display: flex;
  flex-direction: column;
  background: #fff;
  border: 1px solid #aaa;
  box-shadow: 1px 1px 2px #555;
}

.menu li {
  flex: 1;
  display: flex;
  align-items: center;
  position: relative;
  white-space: nowrap;
}

.menu u, .menu kbd {
  font-size: 6px;
}

.mainmenu {
  left: 4px;
  top: 0;
  width: 67px;
  height: 149px;
  border-top: 0;
}

.mainmenu li {
  padding-left: 13px;
}

.mainmenu li::after, .submenu .sub::after {
  content: "";
  position: absolute;
  right: 2px;
  border: 2px solid transparent;
  border-left-color: #222;
  border-right: 0;
}

.mainmenu .hot {
  padding-left: 6px;
  background: #fdf3d4;
}

.hot span {
  display: flex;
  align-items: center;
  width: 38px;
  height: 11px;
  padding-left: 6px;
  border: 1px solid #e0252b;
}

.submenu {
  left: 69px;
  top: 105px;
  width: 92px;
  height: 289px;
  padding-bottom: 1px;
}

.submenu li {
  padding: 0 9px 0 13px;
}

.submenu .ico {
  position: absolute;
  left: 2px;
}

.submenu kbd {
  margin-left: auto;
  font-family: inherit;
}

.submenu .rule {
  flex: none;
  height: 4px;
  padding: 0;
  margin: 0 6px;
}

.submenu .rule::before {
  content: "";
  flex: 1;
  border-top: 1px solid #ddd;
}

.submenu .picked {
  flex: none;
  height: 13px;
  margin: -1px 1px -1px -2px;
  padding: 0 6px 0 14px;
  border: 1px solid #e0252b;
  background: #fdf3d4;
}

/* numbered marks */
.mark {
  position: absolute;
  width: 19px;
  height: 19px;
  border-radius: 50%;
  background: #f43a3a;
  color: #fff;
  font-size: 8px;
  line-height: 19px;
  text-align: center;
}

.mark1 {
  left: 12px;
  top: -38px;
}

.mark2 {
  left: 51px;
  top: 100px;
}

.mark3 {
  left: 124px;
  top: 141px;
}

.mark4 {
  left: 170px;
  top: 118px;
}

/* preferences window */
.dialog {
  position: absolute;
  left: 27px;
  top: 9px;
  width: 284px;
  height: 230px;
  display: flex;
  flex-direction: column;
  padding: 2px 1px;
  border: 1px solid #e0252b;
  background: #e8e8e8;
  font-size: 6px;
}

.dlgtitle {
  display: flex;
  align-items: center;
  gap: 4px;
  height: 12px;
  padding: 0 4px 0 3px;
  background: #5a877f;
  color: #fff;
}

.dlgtitle h2 {
  flex: 1;
  font-size: 6px;
}

.dlgtitle button .ico {
  width: 7px;
  height: 7px;
}

.find {
  display: flex;
  align-items: center;
  gap: 2px;
  padding: 4px 4px 3px 5px;
}

.find svg {
  width: 10px;
  height: 8px;
}

.find input {
  flex: 1;
  height: 10px;
  border: 1px solid #b9bbbb;
  background: #fff;
}

.dlgbody {
  display: flex;
  gap: 1px;
  height: 174px;
  padding: 0 5px 0 4px;
}

.tree {
  display: flex;
  flex-direction: column;
  width: 84px;
  background: #fff;
}

.tree li {
  flex: 1;
  display: flex;
  align-items: center;
  margin-left: 4px;
  padding-left: 8px;
  border-left: 1px solid #eee;
}

.tree li:nth-child(even) {
  background: #f9f9f9;
}

.tree .sel {
  margin-left: 10px;
  padding-left: 2px;
  border: 0;
  background: #3399ff;
  color: #fff;
}

.tree .plus {
  position: relative;
}

.tree .plus::before {
  content: "+";
  position: absolute;
  left: -2px;
  background: #fff;
}

.opts {
  flex: 1;
  display: flex;
  flex-direction: column;
  gap: 1px;
}

.opts section {
  padding: 2px 4px 3px;
  background: #fff;
}

.opts h3 {
  display: flex;
  align-items: center;
  justify-content: space-between;
  height: 10px;
  font-size: 7px;
  color: #2f7fa3;
}

.opts h3 .ico {
  width: 7px;
  height: 7px;
}

.line {
  display: flex;
  align-items: center;
  gap: 7px;
  height: 14px;
}

.line label {
  display: flex;
  align-items: center;
  gap: 3px;
}

.line .apart {
  margin-right: 10px;
}

.line input {
  width: 7px;
  height: 7px;
  appearance: none;
  border: 1px solid #555;
  background: #fff;
}

.line input[type="radio"] {
  border-radius: 50%;
}

.line input[type="radio"]:checked {
  background: radial-gradient(circle, #222 0 1px, #fff 2px);
}

.line input[type="checkbox"]:checked::after {
  content: "";
  display: block;
  width: 2px;
  height: 4px;
  margin-left: 1px;
  border: solid #333;
  border-width: 0 1px 1px 0;
  transform: rotate(40deg);
}

fieldset {
  min-width: 0;
  padding: 1px 2px 0;
  border: 1px solid #e8ecee;
  background: #f4f6f7;
}

fieldset h4 {
  padding-left: 2px;
  height: 9px;
  line-height: 9px;
  font-size: 6px;
  color: #2f7fa3;
}

.resetrow {
  justify-content: space-between;
  height: 16px;
}

.resetrow button {
  width: 16px;
  height: 16px;
  padding: 2px;
  border: 1px solid #bbb;
}

.resetrow svg {
  width: 11px;
  height: 11px;
}

.actions {
  display: flex;
  justify-content: flex-end;
  gap: 2px;
  padding: 6px 7px 0 0;
}

.actions button {
  width: 26px;
  height: 12px;
  border: 1px solid #bfc1c4;
  background: #cbccd2;
}

.actions .ok {
  border-color: #6ab0d8;
  background: #92c9ec;
}

/* bottom */
.status {
  height: 11px;
  flex: none;
  border-top: 1px solid #cfd1d2;
  border-bottom: 1px solid #888;
  background: #fff;
}

.ime {
  position: absolute;
  right: 0;
  bottom: 0;
  width: 108px;
  height: 31px;
}

.pet {
  position: absolute;
  left: 0;
  bottom: 0;
  width: 24px;
  height: 24px;
}

.imebar {
  position: absolute;
  left: 24px;
  right: 0;
  bottom: 1px;
  height: 12px;
  display: flex;
  align-items: center;
  justify-content: space-around;
  padding-left: 3px;
  border-top: 1px solid #7db4e5;
  background: #fff;
  color: #2d7ddb;
  font-size: 7px;
}

.imebar .dim {
  color: #aaa;
}

.faces {
  position: absolute;
  left: 26px;
  bottom: 15px;
  display: flex;
}

.tip {
  position: absolute;
  right: 1px;
  top: 1px;
  width: 63px;
  height: 13px;
  display: flex;
  align-items: center;
  justify-content: space-between;
  padding: 0 3px 0 5px;
  border: 1px solid #78a8d6;
  background: #fff;
  font-size: 6px;
  white-space: nowrap;
}

.tip .ico {
  width: 5px;
  height: 5px;
  color: #999;
}
```
